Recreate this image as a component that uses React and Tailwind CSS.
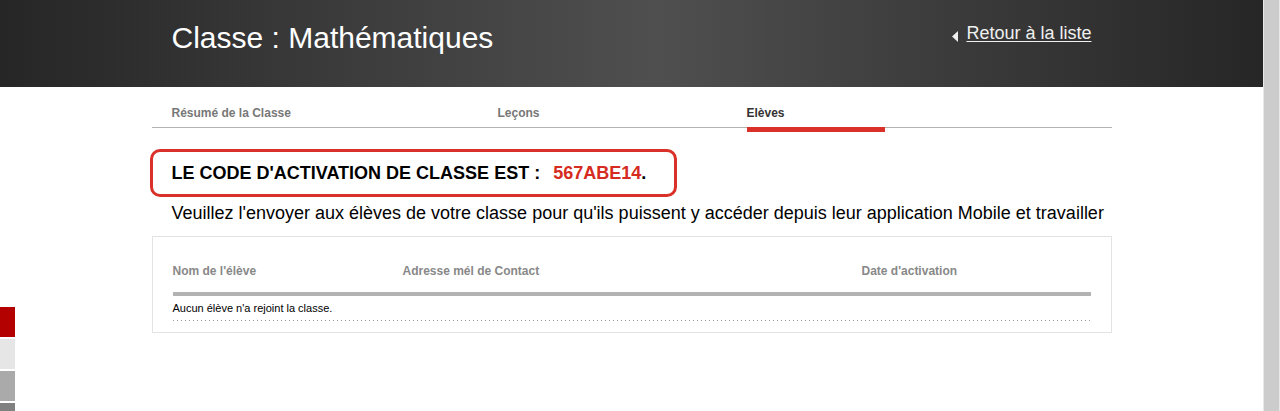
const tabs = [
  { label: 'Résumé de la Classe', w: 'w-[326px] ml-5' },
  { label: 'Leçons', w: 'w-[249px]' },
];

const SideSquares = () => (
  <div className="absolute left-0 top-[307px] flex flex-col gap-[2px]">
    <div className="w-[15px] h-[30px] bg-[#b30000]" />
    <div className="w-[15px] h-[30px] bg-[#e6e6e6]" />
    <div className="w-[15px] h-[30px] bg-[#aaaaaa]" />
    <div className="w-[15px] h-[30px] bg-[#808080]" />
  </div>
);

export default function App() {
  return (
    <div className="relative flex h-[411px] overflow-hidden bg-white font-['Liberation_Sans',Arial,sans-serif]">
      <div className="flex-1">
        <header className="h-[87px] bg-[linear-gradient(90deg,#262626_0%,#4f4f4f_52%,#262626_100%)]">
          <div className="w-[960px] mx-auto flex items-start justify-between px-5">
            <h1 className="mt-[20px] text-[30px] leading-[35px] text-white font-normal">Classe : Mathématiques</h1>
            <a href="#" className="mt-[23px] flex items-start gap-[8px] text-[18px] leading-[21px] text-[#f0f0f0] underline underline-offset-2">
              <svg width="6" height="11" viewBox="0 0 6 11" className="mt-[8px]">
                <path d="M6 0 L0 5.5 L6 11 Z" fill="#f0f0f0" />
              </svg>
              Retour à la liste
            </a>
          </div>
        </header>

        <main className="w-[960px] mx-auto">
          <nav className="flex h-[41px] border-b border-[#b3b3b3]">
            {tabs.map((t) => (
              <div key={t.label} className={`${t.w} pt-[19px] text-[12px] leading-[14px] font-bold text-[#777777]`}>
                {t.label}
              </div>
            ))}
            <div className="w-[138px] h-[45px] shrink-0 pt-[19px] text-[12px] leading-[14px] font-bold text-[#333333] border-b-[5px] border-[#d9302a]">
              Elèves
            </div>
          </nav>

          <div className="mt-[21px] -ml-[2px] w-[527px] h-[48px] border-[3px] border-[#d9302a] rounded-[10px] flex items-center pl-[19px] text-[18px] font-bold text-black">
            LE CODE D'ACTIVATION DE CLASSE EST :&nbsp;&nbsp;<span className="ml-[3px] text-[#d52b20]">567ABE14</span>.
          </div>

          <p className="mt-[6px] pl-5 text-[18px] leading-[20px] text-black">
            Veuillez l'envoyer aux élèves de votre classe pour qu'ils puissent y accéder depuis leur application Mobile et travailler
          </p>

          <div className="mt-[13px] h-[97px] border border-[#e3e3e3] px-5 pt-[27px]">
            <div className="flex text-[12px] leading-[14px] font-bold text-[#888888]">
              <div className="w-[230px]">Nom de l'élève</div>
              <div className="w-[459px]">Adresse mél de Contact</div>
              <div>Date d'activation</div>
            </div>
            <div className="mt-[14px] h-[4px] bg-[#b3b3b3]" />
            <div className="pt-[6px] pb-[5px] text-[11px] leading-[13px] text-black">
              Aucun élève n'a rejoint la classe.
            </div>
            <div className="h-px bg-[repeating-linear-gradient(90deg,#999999_0_1px,transparent_1px_4px)]" />
          </div>
        </main>
      </div>

      <div className="w-[17px] shrink-0 bg-[#cccccc] border-x border-[#e8e8e8]" />
      <SideSquares />
    </div>
  );
}
